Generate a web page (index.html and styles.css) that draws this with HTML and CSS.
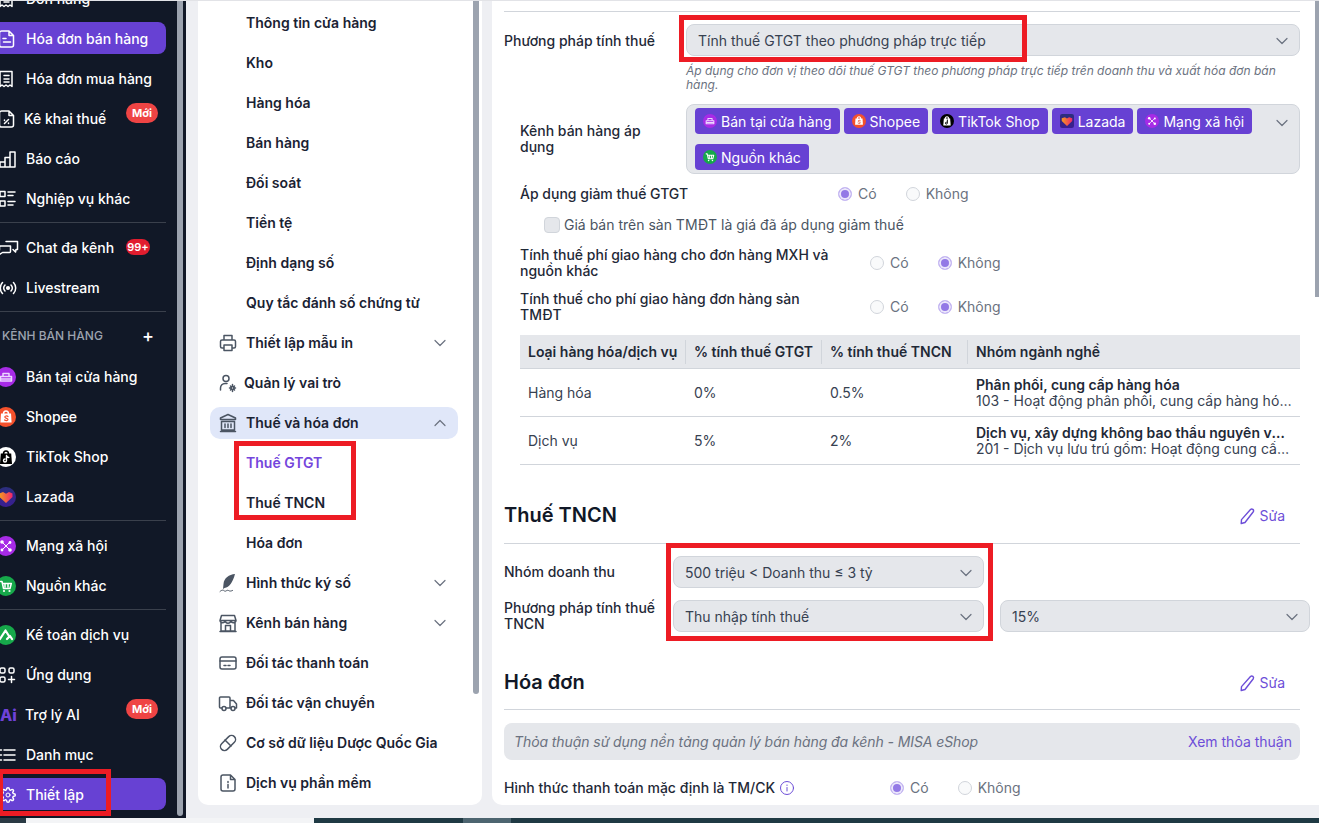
FILE: index.html
```html
<!DOCTYPE html>
<html lang="vi">
  <head>
    <meta charset="UTF-8" />
    <meta name="viewport" content="width=device-width, initial-scale=1.0" />
    <title>Thiết lập - Thuế và hóa đơn</title>
    <link rel="stylesheet" href="styles.css">
  </head>
  <body>
    <!-- icon sheet -->
    <svg class="icon-sheet" xmlns="http://www.w3.org/2000/svg">
      <symbol id="i-doc" viewBox="0 0 20 20"><path d="M5.5 2H13l4.5 4.5V16a2 2 0 0 1-2 2h-10a2 2 0 0 1-2-2V4a2 2 0 0 1 2-2z M13 2v4.5h4.5 M7 9.5h3 M7.5 13h7"/></symbol>
      <symbol id="i-receipt" viewBox="0 0 20 20"><path d="M4 2.5h12v15l-2-1.500-2 1.500-2-1.500-2 1.500-2-1.500-2 1.500z M8 6.5h5 M8 10h5 M8 13h5"/></symbol>
      <symbol id="i-tax" viewBox="0 0 20 20"><path d="M5.5 2H13l4.5 4.5V16a2 2 0 0 1-2 2h-10a2 2 0 0 1-2-2V4a2 2 0 0 1 2-2z M13 2v4.5h4.5 M8.5 14.5l4-4 M8.5 11v.5 M12.5 14v.5"/></symbol>
      <symbol id="i-chart" viewBox="0 0 20 20"><path d="M4 13h5v5H4z M9 8.5h5V18H9z M14 3h5v15h-5z"/></symbol>
      <symbol id="i-list" viewBox="0 0 20 20"><path d="M4 2.5h5v5H4z M4 12h5v5H4z M12 3h7 M12 6.5h5 M12 12.5h7 M12 16h5"/></symbol>
      <symbol id="i-chat" viewBox="0 0 20 20"><path d="M10 3.5h11.5v8H20l-.5 2.5-2.5-2.5 M14.5 8H4.5a1 1 0 0 0-1 1v3 M14.5 8v5.5a1 1 0 0 1-1 1H6.5l-3 2"/></symbol>
      <symbol id="i-live" viewBox="0 0 20 20"><circle cx="12" cy="10" r="1.3" fill="currentColor"/><path d="M9 7a4.500 4.500 0 0 0 0 6 M15 7a4.500 4.500 0 0 1 0 6 M6.5 4.5a8 8 0 0 0 0 11 M17.5 4.5a8 8 0 0 1 0 11"/></symbol>
      <symbol id="i-apps" viewBox="0 0 20 20"><rect x="4" y="3" width="5" height="5" rx="1.5"/><rect x="13" y="3" width="5" height="5" rx="1.5"/><rect x="4" y="12" width="5" height="5" rx="1.5"/><path d="M15.5 11.5v6 M12.5 14.5h6"/></symbol>
      <symbol id="i-menu" viewBox="0 0 20 20"><path d="M8 5h11 M8 10h11 M8 15h11 M3.5 5h2 M3.5 10h2 M3.5 15h2"/></symbol>
      <symbol id="i-gear" viewBox="-6 -3 30 30"><circle cx="12" cy="12" r="3"/><path stroke-width="2.2" d="M19.4 15a1.65 1.65 0 0 0 .33 1.82l.06.06a2 2 0 0 1 0 2.83 2 2 0 0 1-2.83 0l-.06-.06a1.65 1.65 0 0 0-1.82-.33 1.65 1.65 0 0 0-1 1.51V21a2 2 0 0 1-2 2 2 2 0 0 1-2-2v-.09A1.65 1.65 0 0 0 9 19.4a1.65 1.65 0 0 0-1.82.33l-.06.06a2 2 0 0 1-2.83 0 2 2 0 0 1 0-2.83l.06-.06a1.65 1.65 0 0 0 .33-1.82 1.65 1.65 0 0 0-1.51-1H3a2 2 0 0 1-2-2 2 2 0 0 1 2-2h.09A1.65 1.65 0 0 0 4.6 9a1.65 1.65 0 0 0-.33-1.82l-.06-.06a2 2 0 0 1 0-2.83 2 2 0 0 1 2.83 0l.06.06a1.65 1.65 0 0 0 1.82.33H9a1.65 1.65 0 0 0 1-1.51V3a2 2 0 0 1 2-2 2 2 0 0 1 2 2v.09a1.65 1.65 0 0 0 1 1.51 1.65 1.65 0 0 0 1.82-.33l.06-.06a2 2 0 0 1 2.83 0 2 2 0 0 1 0 2.83l-.06.06a1.65 1.65 0 0 0-.33 1.82V9a1.65 1.65 0 0 0 1.51 1H21a2 2 0 0 1 2 2 2 2 0 0 1-2 2h-.09a1.65 1.65 0 0 0-1.51 1z"/></symbol>

      <symbol id="ch-store" viewBox="0 0 20 20"><circle class="solid" cx="10" cy="10" r="10" fill="#a72be6"/><path stroke="#ecd6ff" d="M7 6.5h6v3H7z M4.5 9.5h11V14h-11z M4.500 12h11"/></symbol>
      <symbol id="ch-shopee" viewBox="0 0 20 20"><circle class="solid" cx="10" cy="10" r="10" fill="#f4512c"/><path stroke="#fff" d="M7.5 7c0-4 5-4 5 0"/><path class="solid" fill="#fff" d="M5 6.5h10l.6 9H4.400z"/><path stroke="#f4512c" stroke-width="1.2" d="M12 9.500c-1-1-3.200-.6-3.200.6 0 1.600 3.200 1 3.200 2.500 0 1.200-2.300 1.400-3.400.4"/></symbol>
      <symbol id="ch-tiktok" viewBox="0 0 20 20"><circle class="solid" cx="10" cy="10" r="10" fill="#fff"/><path stroke="#000" stroke-width="1.6" d="M7.5 7c0-4 5-4 5 0"/><path class="solid" fill="#000" d="M4.800 6.500h10.400l.8 10.500H4z"/><path stroke="#fff" stroke-width="1.4" d="M10.500 8.500v5a1.500 1.500 0 1 1-1.500-1.500 M10.500 8.500c.3 1.200 1.100 1.900 2.300 2"/></symbol>
      <symbol id="ch-tiktok-tag" viewBox="0 0 20 20"><circle class="solid" cx="10" cy="10" r="10" fill="#000"/><path stroke="#fff" stroke-width="1.6" d="M7.5 7c0-4 5-4 5 0"/><path class="solid" fill="#fff" d="M5.500 6.500h9l.8 10H4.700z"/><path stroke="#000" stroke-width="1.4" d="M10.500 8.500v4.500a1.400 1.400 0 1 1-1.400-1.400"/></symbol>
      <symbol id="ch-lazada" viewBox="0 0 20 20"><circle class="solid" cx="10" cy="10" r="10" fill="url(#laz-bg)"/><path class="solid" fill="url(#laz-heart)" d="M10 16 3.500 10V6.500L7 5l3 1.800L13 5l3.500 1.500V10z"/></symbol>
      <symbol id="ch-lazada-tag" viewBox="0 0 20 20"><rect class="solid" width="20" height="20" rx="3" fill="url(#laz-bg)"/><path class="solid" fill="url(#laz-heart)" d="M10 17 2.500 10V6L7 4.500l3 1.800 3-1.800L17.500 6v4z"/></symbol>
      <symbol id="ch-social" viewBox="0 0 20 20"><circle class="solid" cx="10" cy="10" r="10" fill="#a72be6"/><path stroke="#fff" stroke-width="1" d="M6 6l8 8 M14 6l-8 8"/><g class="solid" fill="#fff"><circle cx="6" cy="6" r="1.800"/><circle cx="14" cy="6.500" r="1.400"/><circle cx="6" cy="14" r="1.400"/><circle cx="14" cy="14" r="1.800"/><circle cx="10" cy="10" r="1.200"/></g></symbol>
      <symbol id="ch-other" viewBox="0 0 20 20"><circle class="solid" cx="10" cy="10" r="10" fill="#16a84a"/><path stroke="#fff" d="M4.500 5.500H6l1.500 7H14l1.300-5H6.500 M9 8v3 M12 8v3"/><g class="solid" fill="#fff"><circle cx="8" cy="15" r="1.100"/><circle cx="13.500" cy="15" r="1.100"/></g></symbol>
      <symbol id="ch-account" viewBox="0 0 20 20"><circle class="solid" cx="10" cy="10" r="10" fill="#16a84a"/><path stroke="#fff" stroke-width="2.2" d="M4 14 9.500 5.500 13 11 M11 14l3-3 2 3"/></symbol>

      <symbol id="m-printer" viewBox="0 0 20 20"><path d="M6 7V2.5h8V7 M6 15H4a1.500 1.500 0 0 1-1.500-1.500v-5A1.500 1.500 0 0 1 4 7h12a1.500 1.500 0 0 1 1.500 1.500v5A1.500 1.500 0 0 1 16 15h-2 M6 12h8v5.500H6z"/></symbol>
      <symbol id="m-role" viewBox="0 0 20 20"><circle cx="8" cy="5.5" r="3"/><path d="M2.500 17v-2a4.500 4.500 0 0 1 4.500-4.500h2"/><circle cx="14.5" cy="15" r="1.5"/><path d="M14.5 11.5V13 M14.5 17v1.500 M11.500 15H13 M16 15h1.500 M12.500 13l1 1 M16.500 13l-1 1 M12.500 17l1-1 M16.500 17l-1-1"/></symbol>
      <symbol id="m-bank" viewBox="0 0 20 20"><path d="M10 1.500 2.500 5v1.500h15V5z M3.500 8.500h13V17h-13z M2.500 18.500h15 M7 11v3.500 M10 11v3.500 M13 11v3.500"/></symbol>
      <symbol id="m-feather" viewBox="0 0 20 20"><path class="solid" fill="currentColor" d="M17 1c-6 .5-11 4-11.500 10L5 16l1.500-1c5-1 8-5 10.500-14z"/><path stroke-width="1" d="M2 18.500c2-2 3.500-1.500 4.500-.5s2.500-1.500 4-.5 3 .5 4 0"/></symbol>
      <symbol id="m-store" viewBox="0 0 20 20"><path d="M3.500 2.500h13l1.500 5H2z M2 7.500a2.700 2.700 0 0 0 5.300 0 2.700 2.700 0 0 0 5.400 0 2.700 2.700 0 0 0 5.300 0 M3 10v8h14v-8 M7.500 18v-5.500h5V18 M2 18.500h16"/></symbol>
      <symbol id="m-card" viewBox="0 0 20 20"><rect x="2" y="4" width="16" height="12" rx="2"/><path d="M2 8h16 M6 12.500h2 M10 12.500h2"/></symbol>
      <symbol id="m-truck" viewBox="0 0 20 20"><path d="M4 15H2.500a1 1 0 0 1-1-1V5a1 1 0 0 1 1-1H11a1 1 0 0 1 1 1v10H8 M12 7.500h3.500l3 3.500v4H17 M12 15h1"/><circle cx="6" cy="15.5" r="2"/><circle cx="15" cy="15.5" r="2"/></symbol>
      <symbol id="m-pill" viewBox="0 0 20 20"><rect x="1" y="6" width="18" height="8" rx="4" transform="rotate(-45 10 10)"/><path d="M7 7l6 6"/></symbol>
      <symbol id="m-info-doc" viewBox="0 0 20 20"><path d="M5 2h7.500L17 6.500V16a2 2 0 0 1-2 2H5a2 2 0 0 1-2-2V4a2 2 0 0 1 2-2z M12.500 2v4.500H17 M10 8.500v1 M10 11.500V15"/></symbol>

      <symbol id="chev-down" viewBox="0 0 14 14"><path d="M2 4.500 7 9.500l5-5"/></symbol>
      <symbol id="chev-up" viewBox="0 0 14 14"><path d="M2 9.500 7 4.500l5 5"/></symbol>
      <symbol id="i-pencil" viewBox="0 0 16 16"><path d="M11.500 1.500a1.800 1.800 0 0 1 2.800 2.200L6 14.500l-3.800 1 .3-3.900z"/></symbol>
      <symbol id="i-info" viewBox="0 0 16 16"><circle cx="8" cy="8" r="6.500"/><path d="M8 5v.5 M8 7.500V11"/></symbol>
      <linearGradient id="laz-bg" x1="0" y1="0" x2="0" y2="1"><stop offset="0" stop-color="#2b2f7d"/><stop offset="1" stop-color="#3a1d92"/></linearGradient>
      <linearGradient id="laz-heart" x1="0" y1="0" x2="1" y2="0"><stop offset="0" stop-color="#f59a1f"/><stop offset="1" stop-color="#f0246e"/></linearGradient>
    </svg>

    <div class="top-line"></div>
    <div class="app">
      <aside class="sidebar">
        <nav class="side-nav">
          <a class="side-row"><svg class="icon"><use href="#i-receipt" /></svg>Đơn hàng</a>
          <a class="side-row active"><svg class="icon"><use href="#i-doc" /></svg>Hóa đơn bán hàng</a>
          <a class="side-row"><svg class="icon"><use href="#i-receipt" /></svg>Hóa đơn mua hàng</a>
          <a class="side-row tight"><svg class="icon"><use href="#i-tax" /></svg>Kê khai thuế<span class="badge badge-new">Mới</span></a>
          <a class="side-row"><svg class="icon"><use href="#i-chart" /></svg>Báo cáo</a>
          <a class="side-row"><svg class="icon"><use href="#i-list" /></svg>Nghiệp vụ khác</a>
          <div class="side-line"></div>
          <a class="side-row"><svg class="icon"><use href="#i-chat" /></svg>Chat đa kênh<span class="badge badge-count">99+</span></a>
          <a class="side-row"><svg class="icon"><use href="#i-live" /></svg>Livestream</a>
          <div class="side-line"></div>
          <div class="side-head"><span>Kênh bán hàng</span><b class="side-plus">+</b></div>
          <a class="side-row"><svg class="icon"><use href="#ch-store" /></svg>Bán tại cửa hàng</a>
          <a class="side-row"><svg class="icon"><use href="#ch-shopee" /></svg>Shopee</a>
          <a class="side-row"><svg class="icon"><use href="#ch-tiktok" /></svg>TikTok Shop</a>
          <a class="side-row"><svg class="icon"><use href="#ch-lazada" /></svg>Lazada</a>
          <div class="side-line"></div>
          <a class="side-row"><svg class="icon"><use href="#ch-social" /></svg>Mạng xã hội</a>
          <a class="side-row"><svg class="icon"><use href="#ch-other" /></svg>Nguồn khác</a>
          <div class="side-line"></div>
          <a class="side-row"><svg class="icon"><use href="#ch-account" /></svg>Kế toán dịch vụ</a>
          <a class="side-row"><svg class="icon"><use href="#i-apps" /></svg>Ứng dụng</a>
          <a class="side-row tight"><span class="ai-logo">Ai</span>Trợ lý AI<span class="badge badge-new">Mới</span></a>
          <a class="side-row"><svg class="icon"><use href="#i-menu" /></svg>Danh mục</a>
          <a class="side-row active"><svg class="icon"><use href="#i-gear" /></svg>Thiết lập</a>
        </nav>
        <div class="scroll-thumb side-thumb"></div>
      </aside>

      <section class="menu-panel">
        <a class="menu-row plain">Thông tin cửa hàng</a>
        <a class="menu-row plain">Kho</a>
        <a class="menu-row plain">Hàng hóa</a>
        <a class="menu-row plain">Bán hàng</a>
        <a class="menu-row plain">Đối soát</a>
        <a class="menu-row plain">Tiền tệ</a>
        <a class="menu-row plain">Định dạng số</a>
        <a class="menu-row plain">Quy tắc đánh số chứng từ</a>
        <a class="menu-row"><svg class="icon"><use href="#m-printer" /></svg>Thiết lập mẫu in<svg class="chev"><use href="#chev-down" /></svg></a>
        <a class="menu-row tight"><svg class="icon"><use href="#m-role" /></svg>Quản lý vai trò</a>
        <a class="menu-row open"><svg class="icon"><use href="#m-bank" /></svg>Thuế và hóa đơn<svg class="chev"><use href="#chev-up" /></svg></a>
        <a class="menu-row plain current">Thuế GTGT</a>
        <a class="menu-row plain">Thuế TNCN</a>
        <a class="menu-row plain">Hóa đơn</a>
        <a class="menu-row"><svg class="icon"><use href="#m-feather" /></svg>Hình thức ký số<svg class="chev"><use href="#chev-down" /></svg></a>
        <a class="menu-row"><svg class="icon"><use href="#m-store" /></svg>Kênh bán hàng<svg class="chev"><use href="#chev-down" /></svg></a>
        <a class="menu-row"><svg class="icon"><use href="#m-card" /></svg>Đối tác thanh toán</a>
        <a class="menu-row"><svg class="icon"><use href="#m-truck" /></svg>Đối tác vận chuyển</a>
        <a class="menu-row"><svg class="icon"><use href="#m-pill" /></svg>Cơ sở dữ liệu Dược Quốc Gia</a>
        <a class="menu-row"><svg class="icon"><use href="#m-info-doc" /></svg>Dịch vụ phần mềm</a>
        <div class="scroll-thumb menu-thumb"></div>
      </section>

      <main class="detail-panel">
        <div class="rule first-rule"></div>

        <div class="field method-field">
          <label class="field-label method-label">Phương pháp tính thuế</label>
          <div class="select method-select">Tính thuế GTGT theo phương pháp trực tiếp<svg class="chev"><use href="#chev-down" /></svg></div>
        </div>
        <p class="hint">Áp dụng cho đơn vị theo dõi thuế GTGT theo phương pháp trực tiếp trên doanh thu và xuất hóa đơn bán hàng.</p>

        <div class="sub-block">
          <div class="field channel-field">
            <label class="field-label channel-label">Kênh bán hàng áp dụng</label>
            <div class="multi">
              <div class="tags">
                <span class="tag"><svg class="tag-icon"><use href="#ch-store" /></svg>Bán tại cửa hàng</span>
                <span class="tag"><svg class="tag-icon"><use href="#ch-shopee" /></svg>Shopee</span>
                <span class="tag"><svg class="tag-icon"><use href="#ch-tiktok-tag" /></svg>TikTok Shop</span>
                <span class="tag"><svg class="tag-icon"><use href="#ch-lazada-tag" /></svg>Lazada</span>
                <span class="tag"><svg class="tag-icon"><use href="#ch-social" /></svg>Mạng xã hội</span>
                <span class="tag"><svg class="tag-icon"><use href="#ch-other" /></svg>Nguồn khác</span>
              </div>
              <svg class="chev"><use href="#chev-down" /></svg>
            </div>
          </div>

          <div class="radio-row first-radio">
            <span class="radio-label">Áp dụng giảm thuế GTGT</span>
            <div class="radios radios-near">
              <span class="radio on">Có</span>
              <span class="radio">Không</span>
            </div>
          </div>

          <div class="check-row">
            <span class="checkbox"></span>
            Giá bán trên sàn TMĐT là giá đã áp dụng giảm thuế
          </div>

          <div class="radio-row">
            <span class="radio-label">Tính thuế phí giao hàng cho đơn hàng MXH và nguồn khác</span>
            <div class="radios">
              <span class="radio">Có</span>
              <span class="radio on">Không</span>
            </div>
          </div>

          <div class="radio-row">
            <span class="radio-label">Tính thuế cho phí giao hàng đơn hàng sàn TMĐT</span>
            <div class="radios">
              <span class="radio">Có</span>
              <span class="radio on">Không</span>
            </div>
          </div>

          <table class="tax-table">
            <thead>
              <tr>
                <th class="col-type"><span>Loại hàng hóa/dịch vụ</span></th>
                <th class="col-vat"><span>% tính thuế GTGT</span></th>
                <th class="col-pit"><span>% tính thuế TNCN</span></th>
                <th><span>Nhóm ngành nghề</span></th>
              </tr>
            </thead>
            <tbody>
              <tr>
                <td>Hàng hóa</td>
                <td>0%</td>
                <td>0.5%</td>
                <td>
                  <div class="cut strong">Phân phối, cung cấp hàng hóa</div>
                  <div class="cut">103 - Hoạt động phân phối, cung cấp hàng hóa chịu thuế</div>
                </td>
              </tr>
              <tr>
                <td>Dịch vụ</td>
                <td>5%</td>
                <td>2%</td>
                <td>
                  <div class="cut strong">Dịch vụ, xây dựng không bao thầu nguyên vật liệu</div>
                  <div class="cut">201 - Dịch vụ lưu trú gồm: Hoạt động cung cấp cơ sở lưu trú</div>
                </td>
              </tr>
            </tbody>
          </table>
        </div>

        <div class="section-head pit-head">
          <h2>Thuế TNCN</h2>
          <a class="edit-link"><svg class="pencil"><use href="#i-pencil" /></svg>Sửa</a>
        </div>

        <div class="field revenue-field">
          <label class="field-label pit-label">Nhóm doanh thu</label>
          <div class="select pit-select">500 triệu &lt; Doanh thu ≤ 3 tỷ<svg class="chev"><use href="#chev-down" /></svg></div>
        </div>
        <div class="field pit-method-field">
          <label class="field-label pit-label">Phương pháp tính thuế TNCN</label>
          <div class="select pit-select">Thu nhập tính thuế<svg class="chev"><use href="#chev-down" /></svg></div>
          <div class="select rate-select">15%<svg class="chev"><use href="#chev-down" /></svg></div>
        </div>

        <div class="section-head invoice-head">
          <h2>Hóa đơn</h2>
          <a class="edit-link"><svg class="pencil"><use href="#i-pencil" /></svg>Sửa</a>
        </div>

        <div class="terms">
          <em>Thỏa thuận sử dụng nền tảng quản lý bán hàng đa kênh - MISA eShop</em>
          <a class="terms-link">Xem thỏa thuận</a>
        </div>

        <div class="radio-row payment-row">
          <span class="radio-label payment-label">Hình thức thanh toán mặc định là TM/CK<svg class="info"><use href="#i-info" /></svg></span>
          <div class="radios">
            <span class="radio on">Có</span>
            <span class="radio">Không</span>
          </div>
        </div>
        <div class="scroll-thumb detail-thumb"></div>
      </main>

      <!-- red marks drawn on the screenshot -->
      <div class="mark mark-setting"></div>
      <div class="mark mark-tax-menu"></div>
      <div class="mark mark-method"></div>
      <div class="mark mark-pit"></div>
    </div>
    <div class="taskbar"><span class="task-gap"></span><span class="task-white"></span><span class="task-dark"></span><span class="task-light"></span></div>
  </body>
</html>
```

FILE: styles.css
```css
* {
  box-sizing: border-box;
}
html,
body {
  margin: 0;
  height: 823px;
  overflow: hidden;
}
body {
  background: #eeeff3;
  font-family: Inter, "Noto Sans", sans-serif;
  font-size: 14px;
  line-height: 16px;
  color: #1f2937;
}
a {
  color: inherit;
  text-decoration: none;
}
.icon-sheet {
  position: absolute;
  width: 0;
  height: 0;
}
symbol {
  overflow: visible;
}
svg {
  overflow: visible;
  fill: none;
  stroke: currentColor;
  stroke-width: 1.5;
  stroke-linecap: round;
  stroke-linejoin: round;
  flex-shrink: 0;
}
.solid {
  stroke: none;
}
.icon {
  width: 20px;
  height: 20px;
}
.chev {
  width: 14px;
  height: 14px;
  stroke-width: 1.2;
  color: #6b7280;
}
.top-line {
  height: 1px;
  background: #e2e3e7;
}
.app {
  position: relative;
  display: flex;
  height: 817px;
  overflow: hidden;
}

/* dark sidebar */
.sidebar {
  position: relative;
  width: 186px;
  flex-shrink: 0;
  background: #111827;
  color: #fff;
  overflow: hidden;
}
.side-nav {
  width: 178px;
  margin: -19px 0 0 -12px;
  font-weight: 500;
}
.side-row {
  position: relative;
  display: flex;
  align-items: center;
  gap: 10px;
  height: 32px;
  margin-bottom: 8px;
  padding: 1px 0 0 8px;
  border-radius: 8px;
}
.side-row.tight {
  gap: 8px;
}
.side-row.active {
  background: #6741d3;
}
.side-line {
  height: 1px;
  margin: 0 0 8px 12px;
  background: #3a404c;
}
.side-head {
  display: flex;
  align-items: center;
  justify-content: space-between;
  height: 30px;
  margin-bottom: 10px;
  padding: 1px 12px 0 14px;
  font-size: 12px;
  text-transform: uppercase;
  color: #9ca3af;
}
.side-plus {
  font-size: 18px;
  font-weight: 500;
  color: #fff;
}
.ai-logo {
  width: 21px;
  padding-left: 4px;
  font-size: 16px;
  font-weight: 800;
  color: #6f42d8;
}
.badge {
  position: absolute;
  color: #fff;
  font-size: 11px;
  font-weight: 700;
  text-align: center;
}
.badge-new {
  top: 1px;
  left: 138px;
  width: 32px;
  height: 20px;
  line-height: 20px;
  border-radius: 10px;
  background: #ef4444;
}
.badge-count {
  top: 8px;
  left: 138px;
  width: 24px;
  height: 16px;
  border-radius: 8px;
  background: #e11d2e;
  font-weight: 600;
}
.scroll-thumb {
  position: absolute;
  background: #9ca3af;
}
.side-thumb {
  top: 0;
  left: 177px;
  width: 6px;
  height: 815px;
  border-radius: 0 0 3px 3px;
}

/* settings menu */
.menu-panel {
  position: relative;
  width: 284px;
  height: 804px;
  margin: 0 10px 0 12px;
  padding: 6px 0 0 12px;
  flex-shrink: 0;
  background: #fff;
  border-radius: 0 0 10px 10px;
  overflow: hidden;
  font-weight: 600;
  color: #1a2233;
}
.menu-row {
  display: flex;
  align-items: center;
  gap: 8px;
  width: 248px;
  height: 32px;
  margin-bottom: 8px;
  padding: 0 11px 0 8px;
  border-radius: 10px;
}
.menu-row .icon {
  color: #4b5563;
}
.menu-row.tight {
  gap: 6px;
}
.menu-row .chev {
  margin-left: auto;
}
.menu-row.plain {
  padding-left: 36px;
}
.menu-row.open {
  background: #e0e7f9;
}
.menu-row.current {
  color: #7445dc;
}
.menu-thumb {
  top: 0;
  left: 275px;
  width: 6px;
  height: 693px;
  border-radius: 0 0 3px 3px;
}

/* detail panel */
.detail-panel {
  position: relative;
  flex: 1;
  height: 804px;
  padding: 10px 19px 0 12px;
  background: #fff;
  border-radius: 0 0 0 10px;
  overflow: hidden;
}
.rule {
  height: 1px;
  background: #d1d5db;
}
.field {
  display: flex;
  align-items: center;
}
.method-field {
  margin-top: 12px;
}
.field-label {
  flex-shrink: 0;
  font-weight: 500;
}
.method-label {
  width: 182px;
  padding-top: 1px;
}
.select {
  display: flex;
  align-items: center;
  justify-content: space-between;
  flex-shrink: 0;
  height: 32px;
  padding: 1px 10px 0 11px;
  background: #e5e7eb;
  border: 1px solid #d1d5db;
  border-radius: 8px;
  color: #374151;
}
.method-select {
  flex: 1;
}
.hint {
  margin: 8px 0 0 182px;
  font-size: 12px;
  line-height: 14px;
  font-style: italic;
  color: #6b7280;
}
.sub-block {
  padding-left: 16px;
}
.channel-field {
  margin-top: 12px;
}
.channel-label {
  width: 166px;
  padding-right: 10px;
}
.multi {
  display: flex;
  justify-content: space-between;
  flex: 1;
  height: 70px;
  padding: 3px 10px 3px 8px;
  background: #e5e7eb;
  border: 1px solid #d1d5db;
  border-radius: 8px;
}
.multi .chev {
  margin-top: 8px;
}
.tags {
  display: flex;
  flex-wrap: wrap;
  gap: 10px 4px;
  width: 570px;
}
.tag {
  display: flex;
  align-items: center;
  gap: 4px;
  height: 26px;
  padding: 1px 8px 0;
  background: #6741d3;
  border-radius: 4px;
  color: #fff;
}
.tag-icon {
  width: 14px;
  height: 14px;
  margin-top: -2px;
}
.radio-row {
  display: flex;
  align-items: center;
  margin-top: 12px;
}
.radio-label {
  width: 315px;
  margin-right: 35px;
  flex-shrink: 0;
  font-weight: 500;
}
.radios {
  display: flex;
  gap: 29px;
  color: #6b7280;
}
.radios-near {
  margin-left: -32px;
}
.radio {
  display: flex;
  align-items: center;
  gap: 8px;
}
.radio::before {
  content: "";
  width: 12px;
  height: 12px;
  margin-right: -2px;
  background: #f9fafb;
  border: 1px solid #d1d5db;
  border-radius: 50%;
}
.radio.on::before {
  background: #9379e6;
  border: 1px solid #c9bcf3;
  box-shadow: inset 0 0 0 2px #ece8fb;
}
.check-row {
  display: flex;
  align-items: center;
  gap: 4px;
  height: 16px;
  margin: 15px 0 14px 24px;
  color: #4b5563;
}
.checkbox {
  width: 16px;
  height: 16px;
  background: #e5e7eb;
  border: 1px solid #d1d5db;
  border-radius: 4px;
}
.tax-table {
  width: 780px;
  margin-top: 12px;
  table-layout: fixed;
  border-collapse: collapse;
}
.col-type {
  width: 166px;
}
.col-vat {
  width: 136px;
}
.col-pit {
  width: 146px;
}
.tax-table th {
  height: 33px;
  padding: 1px 0 0;
  background: #e5e7eb;
  border-bottom: 1px solid #d1d5db;
  font-weight: 600;
  text-align: left;
  white-space: nowrap;
}
.tax-table th span {
  display: block;
  height: 24px;
  line-height: 24px;
  padding-left: 8px;
  border-right: 1px solid #d1d5db;
}
.tax-table th:last-child span {
  border-right: 0;
}
.tax-table td {
  height: 48px;
  padding: 1px 8px 0;
  border-bottom: 1px solid #d1d5db;
  color: #374151;
}
.cut {
  overflow: hidden;
  white-space: nowrap;
  text-overflow: ellipsis;
}
.strong {
  font-weight: 600;
  color: #1f2937;
}
.section-head {
  display: flex;
  align-items: center;
  justify-content: space-between;
  height: 46px;
  padding: 0 15px 10px 0;
  border-bottom: 1px solid #d1d5db;
}
.section-head h2 {
  margin: 0;
  font-size: 20px;
  line-height: 24px;
  font-weight: 600;
  color: #111827;
}
.pit-head {
  margin-top: 33px;
}
.invoice-head {
  margin-top: 33px;
  height: 45px;
  padding-bottom: 9px;
}
.edit-link {
  display: flex;
  align-items: center;
  gap: 4px;
  padding-top: 2px;
  color: #6d4ed8;
}
.pencil {
  width: 16px;
  height: 16px;
  stroke-width: 1.4;
}
.revenue-field {
  margin-top: 12px;
}
.pit-method-field {
  margin-top: 12px;
}
.pit-label {
  width: 169px;
  padding-right: 10px;
}
.pit-select {
  width: 311px;
  padding-top: 2px;
}
.rate-select {
  width: 310px;
  margin-left: 16px;
  padding-top: 2px;
}
.terms {
  display: flex;
  align-items: center;
  justify-content: space-between;
  height: 37px;
  margin-top: 13px;
  padding: 2px 8px 0 10px;
  background: #e5e7eb;
  border-radius: 8px;
  color: #6b7280;
}
.terms em {
  letter-spacing: -0.08px;
}
.terms-link {
  color: #6d4ed8;
}
.payment-row {
  margin-top: 20px;
}
.payment-label {
  display: flex;
  align-items: center;
  gap: 4px;
  width: 386px;
  margin-right: 0;
}
.info {
  width: 16px;
  height: 16px;
  stroke-width: 1;
  color: #6d4ed8;
}
.detail-thumb {
  top: 0;
  right: 0;
  width: 4px;
  height: 296px;
}

/* marks */
.mark {
  position: absolute;
  border: 5px solid #ed1c24;
}
.mark-setting {
  top: 768px;
  left: -2px;
  width: 113px;
  height: 47px;
}
.mark-tax-menu {
  top: 440px;
  left: 234px;
  width: 122px;
  height: 79px;
}
.mark-method {
  top: 14px;
  left: 679px;
  width: 348px;
  height: 47px;
}
.mark-pit {
  top: 542px;
  left: 666px;
  width: 327px;
  height: 98px;
}

/* bottom strip */
.taskbar {
  display: flex;
  height: 5px;
  background: #1f3a44;
}
.task-gap {
  width: 26px;
  background: #2a3a44;
}
.task-white {
  width: 288px;
  background: #f3f4f6;
}
.task-dark {
  width: 149px;
}
.task-light {
  width: 48px;
  background: #4d6570;
}
```
